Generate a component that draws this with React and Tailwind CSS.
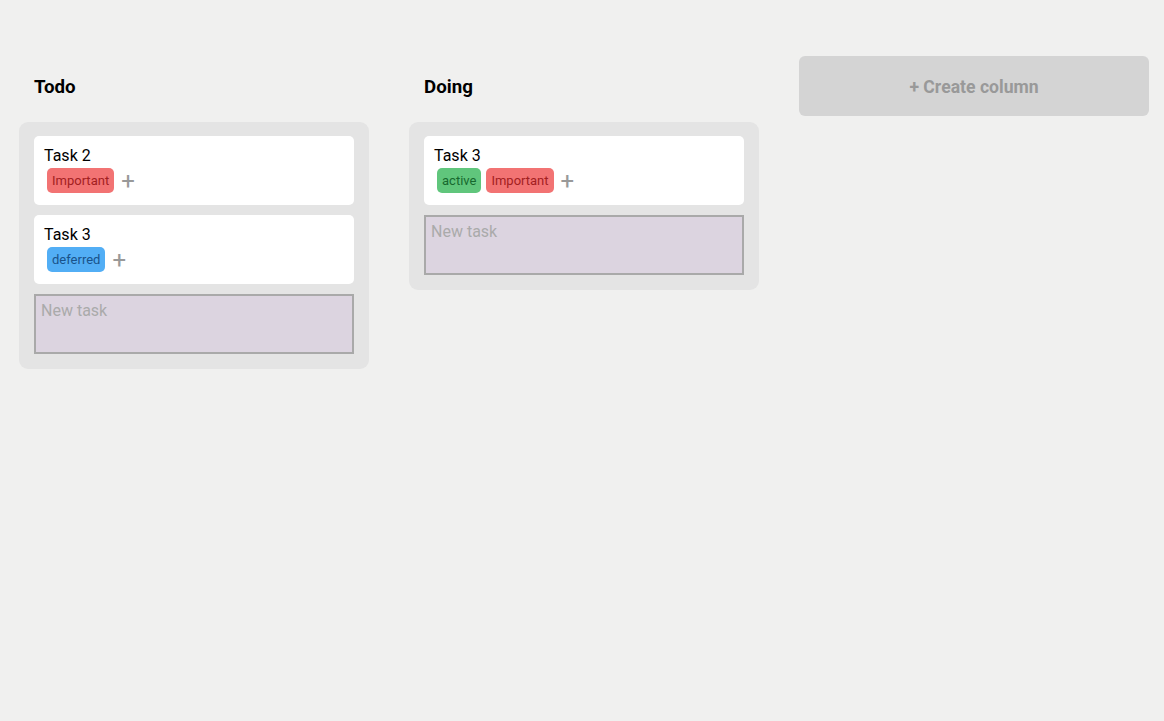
import React from "react";

const tagStyles = {
  Important: "bg-[#f27373] text-[#a3201f]",
  active: "bg-[#60c67c] text-[#17692e]",
  deferred: "bg-[#52aef5] text-[#19528a]",
};

function Card({ title, tags }) {
  return (
    <div className="bg-white rounded-[5px] px-[10px] pt-[10px] pb-[12px]">
      <div className="text-[16px] leading-[19px] text-black">{title}</div>
      <div className="flex items-center mt-[3px] pl-[3px] gap-[5px]">
        {tags.map((t) => (
          <span
            key={t}
            className={`h-[25px] px-[5px] rounded-[5px] text-[13px] flex items-center ${tagStyles[t]}`}
          >
            {t}
          </span>
        ))}
        <span className="ml-[2px] text-[24px] leading-[22px] text-[#999] font-normal">+</span>
      </div>
    </div>
  );
}

function Column({ title, cards }) {
  return (
    <div className="w-[350px] flex flex-col">
      <div className="h-[60px] flex items-center pt-[2px] pl-[15px] text-[18.72px] font-bold text-black">{title}</div>
      <div className="mt-[6px] bg-[#e4e4e4] rounded-[9px] px-[15px] pt-[14px] pb-[15px] flex flex-col gap-[10px]">
        {cards.map((c, i) => (
          <Card key={i} {...c} />
        ))}
        <textarea
          placeholder="New task"
          className="h-[60px] w-full bg-[#dcd4e0] border-2 border-[#a9a9a9] px-[5px] pt-[5px] text-[16px] leading-[19px] placeholder:text-[#aaa] resize-none outline-none block"
        />
      </div>
    </div>
  );
}

export default function App() {
  return (
    <div
      className="min-h-[721px] w-full bg-[#f0f0ef] pt-[56px] pl-[19px] flex items-start gap-[40px]"
      style={{ fontFamily: "Roboto, 'Liberation Sans', sans-serif" }}
    >
      <Column
        title="Todo"
        cards={[
          { title: "Task 2", tags: ["Important"] },
          { title: "Task 3", tags: ["deferred"] },
        ]}
      />
      <Column title="Doing" cards={[{ title: "Task 3", tags: ["active", "Important"] }]} />
      <button className="w-[350px] h-[60px] pt-[2px] bg-[#d4d4d4] rounded-[6px] text-[17.6px] font-bold text-[#999]">
        + Create column
      </button>
    </div>
  );
}
